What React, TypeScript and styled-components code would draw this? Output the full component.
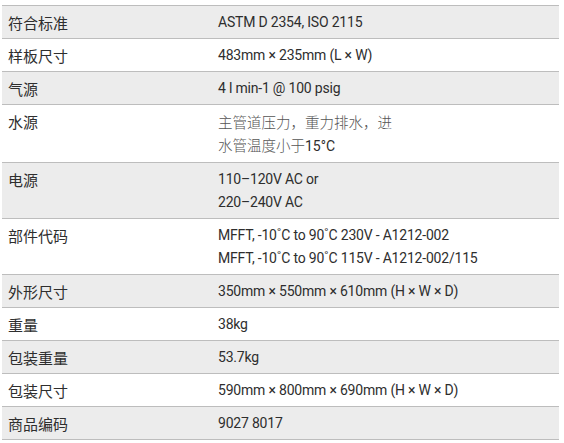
import React from "react";
import styled, { createGlobalStyle } from "styled-components";

const Global = createGlobalStyle`
  html, body { margin: 0; padding: 0; background: #ffffff; }
  body { font-family: Roboto, "Noto Sans CJK SC", sans-serif; color: #333; }
`;

const Page = styled.div`
  padding: 5px 5px 0 2px;
`;

const Table = styled.div`
  width: 557px;
  border-top: 1px solid #bdbdbd;
`;

const Row = styled.div<{ $shade?: boolean }>`
  display: grid;
  grid-template-columns: 210px 1fr;
  background: ${(p) => (p.$shade ? "#ececec" : "#ffffff")};
  border-bottom: 1px solid #bdbdbd;
  padding: 5px 0 4px;
`;

const Label = styled.div`
  padding-left: 6px;
  font-family: "Noto Sans CJK SC", sans-serif;
  font-size: 15px;
  line-height: 23px;
  color: #2e2e2e;
`;

const Value = styled.div`
  padding-left: 6px;
  font-family: Roboto, "Noto Sans CJK SC", sans-serif;
  font-size: 14px;
  line-height: 23px;
  color: #2e2e2e;
  letter-spacing: -0.2px;
`;

const Line = styled.div`
  white-space: nowrap;
`;

const CjkLine = styled.div`
  white-space: nowrap;
  font-family: "Noto Sans CJK SC", sans-serif;
  font-size: 14.5px;
  font-weight: 300;
  color: #555;
  letter-spacing: 0;
`;

const Num = styled.span`
  font-family: Roboto, sans-serif;
  font-weight: 400;
  color: #2e2e2e;
  font-size: 14px;
`;

type Spec = { label: string; lines: React.ReactNode[] };

const specs: Spec[] = [
  { label: "符合标准", lines: ["ASTM D 2354, ISO 2115"] },
  { label: "样板尺寸", lines: ["483mm × 235mm (L × W)"] },
  { label: "气源", lines: ["4 l min-1 @ 100 psig"] },
  {
    label: "水源",
    lines: [
      <CjkLine key="a">主管道压力，重力排水，进</CjkLine>,
      <CjkLine key="b">
        水管温度小于<Num>15°C</Num>
      </CjkLine>,
    ],
  },
  { label: "电源", lines: ["110–120V AC or", "220–240V AC"] },
  {
    label: "部件代码",
    lines: [
      "MFFT, -10˚C to 90˚C 230V - A1212-002",
      "MFFT, -10˚C to 90˚C 115V - A1212-002/115",
    ],
  },
  { label: "外形尺寸", lines: ["350mm × 550mm × 610mm (H × W × D)"] },
  { label: "重量", lines: ["38kg"] },
  { label: "包装重量", lines: ["53.7kg"] },
  { label: "包装尺寸", lines: ["590mm × 800mm × 690mm (H × W × D)"] },
  { label: "商品编码", lines: ["9027 8017"] },
];

export default function App() {
  return (
    <Page>
      <Global />
      <Table>
        {specs.map((s, i) => (
          <Row key={s.label} $shade={i % 2 === 0}>
            <Label>{s.label}</Label>
            <Value>
              {s.lines.map((l, j) =>
                typeof l === "string" ? <Line key={j}>{l}</Line> : l
              )}
            </Value>
          </Row>
        ))}
      </Table>
    </Page>
  );
}
